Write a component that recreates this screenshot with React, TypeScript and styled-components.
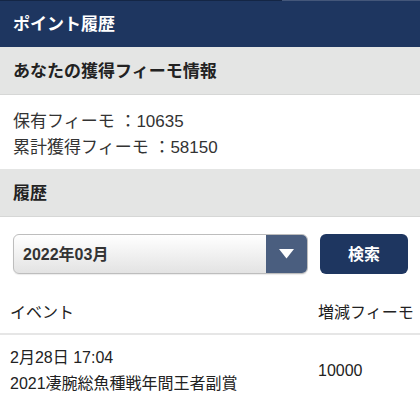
import styled, { createGlobalStyle } from 'styled-components';

const GlobalStyle = createGlobalStyle`
body {
  margin: 0;
  background: #ffffff;
  font-family: "Liberation Sans", "Noto Sans CJK JP", sans-serif;
  color: #333333;
}
`

const App = () => {
  return (
    <Page>
      <GlobalStyle />
      <Progress>
        <ProgressFill />
      </Progress>
      <TopBar>ポイント履歴</TopBar>
      <SectionTitle>あなたの獲得フィーモ情報</SectionTitle>
      <InfoBlock>
        <InfoLine>保有フィーモ ：10635</InfoLine>
        <InfoLine>累計獲得フィーモ ：58150</InfoLine>
      </InfoBlock>
      <SectionTitle>履歴</SectionTitle>
      <FilterRow>
        <SelectBox>
          <SelectText>2022年03月</SelectText>
          <SelectArrow>
            <svg width="15" height="10" viewBox="0 0 15 10">
              <path d="M0 0 L15 0 L7.5 9.5 Z" fill="#ffffff" />
            </svg>
          </SelectArrow>
        </SelectBox>
        <SearchButton>検索</SearchButton>
      </FilterRow>
      <TableHead>
        <EventCol>イベント</EventCol>
        <PointCol>増減フィーモ</PointCol>
      </TableHead>
      <TableRow>
        <EventCol>
          <div>2月28日 17:04</div>
          <div>2021凄腕総魚種戦年間王者副賞</div>
        </EventCol>
        <PointCol>10000</PointCol>
      </TableRow>
    </Page>
  )
}

export default App

const Page = styled.div`
width: 420px;
min-height: 400px;
display: flex;
flex-direction: column;
`

const Progress = styled.div`
height: 1px;
background: #44577a;
display: flex;
`

const ProgressFill = styled.div`
width: 282px;
background: #142645;
`

const TopBar = styled.div`
height: 46px;
line-height: 47px;
padding: 0 13px;
background: #1e3660;
color: #ffffff;
font-size: 17px;
font-weight: 700;
`

const SectionTitle = styled.div`
height: 47px;
line-height: 49px;
padding: 0 13px;
background: #e4e5e4;
border-bottom: 1px solid #d6d7d6;
color: #222222;
font-size: 17px;
font-weight: 700;
`

const InfoBlock = styled.div`
padding: 14px 13px 8px;
`

const InfoLine = styled.div`
font-size: 17px;
line-height: 26px;
color: #333333;
`

const FilterRow = styled.div`
display: flex;
gap: 12px;
padding: 17px 12px 0 13px;
`

const SelectBox = styled.div`
flex: 1;
height: 38px;
display: flex;
border: 1px solid #bdbdbd;
border-radius: 6px;
overflow: hidden;
background: linear-gradient(#ffffff, #e3e3e3);
box-shadow: 0 1px 1px rgba(0, 0, 0, 0.08);
`

const SelectText = styled.div`
flex: 1;
padding-left: 9px;
line-height: 40px;
font-size: 16px;
font-weight: 700;
color: #333333;
`

const SelectArrow = styled.div`
width: 41px;
display: flex;
align-items: center;
justify-content: center;
background: #4a5e7f;
`

const SearchButton = styled.div`
width: 88px;
height: 40px;
line-height: 42px;
text-align: center;
background: #1e3660;
border-radius: 6px;
color: #ffffff;
font-size: 16px;
font-weight: 700;
`

const TableHead = styled.div`
display: flex;
padding: 27px 0 8px;
border-bottom: 2px solid #e6e6e6;
font-size: 16px;
line-height: 24px;
`

const TableRow = styled.div`
display: flex;
align-items: center;
padding: 10px 0 6px;
font-size: 16px;
line-height: 26px;
`

const EventCol = styled.div`
flex: 1;
padding-left: 10px;
color: #222222;
white-space: nowrap;
`

const PointCol = styled.div`
width: 102px;
color: #222222;
white-space: nowrap;
`
